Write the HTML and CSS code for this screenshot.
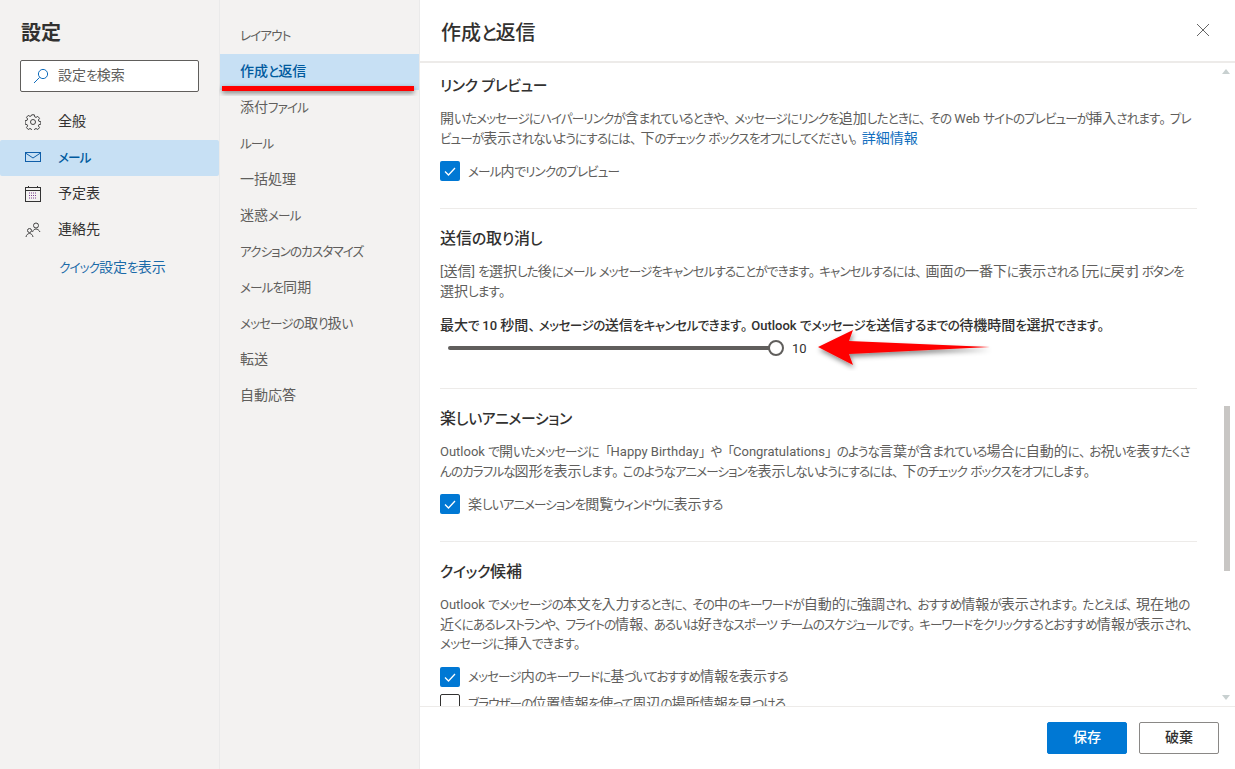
FILE: index.html
```html
<!DOCTYPE html>
<html lang="ja">
<head>
<meta charset="utf-8">
<title>設定</title>
<link rel="stylesheet" href="styles.css">
</head>
<body>
<div class="app">
  <aside class="nav">
    <h1 class="nav-title">設定</h1>
    <div class="search">
      <svg class="search-icon" viewBox="0 0 16 16" width="16" height="16"><circle cx="10" cy="6" r="4.6" fill="none" stroke="#0f6cbd" stroke-width="1"/><path d="M6.6 9.4 1 15" fill="none" stroke="#0f6cbd" stroke-width="1"/></svg>
      <span>設定を検索</span>
    </div>
    <ul class="nav-list">
      <li class="nav-item">
        <svg viewBox="0 0 16 16" width="16" height="16" fill="none" stroke="#444" stroke-width="1"><circle cx="8" cy="8" r="2.5"/><path d="M6.7 .8h2.6l.4 2 1.3.6 1.8-1 1.7 1.9-1.1 1.7.5 1.3 2 .4v2.500l-2 .4-.5 1.300 1.100 1.700-1.700 1.900-1.800-1-1.300.6-.4 2H6.700l-.4-2-1.300-.6-1.800 1-1.700-1.900 1.100-1.700-.5-1.300-2-.4V6.700l2-.4.5-1.300L1.500 3.300l1.700-1.900 1.800 1 1.300-.6z"/></svg>
        <span>全般</span>
      </li>
      <li class="nav-item active">
        <svg viewBox="0 0 16 12" width="16" height="12" fill="none" stroke="#0f5ea8" stroke-width="1"><rect x=".5" y=".5" width="15" height="9"/><path d="M.5 1 8 6l7.500-5"/></svg>
        <span>メール</span>
      </li>
      <li class="nav-item">
        <svg viewBox="0 0 16 16" width="16" height="16" fill="none" stroke="#333" stroke-width="1"><rect x=".5" y="1.500" width="15" height="14"/><path d="M.5 4.500h15M3.500 0v2M12.500 0v2"/><path d="M4 7h8M4 9.500h8M4 12h8" stroke="#7a3b8f" stroke-dasharray="1 1"/></svg>
        <span>予定表</span>
      </li>
      <li class="nav-item">
        <svg viewBox="0 0 16 16" width="16" height="16" fill="none" stroke="#444" stroke-width="1"><circle cx="11" cy="3.500" r="2.500"/><path d="M7.500 10c.5-2 2-3 3.500-3s3 1 4 3"/><circle cx="4.500" cy="8.500" r="2"/><path d="M1 15c.3-2 1.700-3.500 3.500-3.500S7.700 13 8 15"/></svg>
        <span>連絡先</span>
      </li>
    </ul>
    <a class="quick-link">クイック設定を表示</a>
  </aside>

  <nav class="subnav">
    <div class="sub-item">レイアウト</div>
    <div class="sub-item active">作成と返信</div>
    <div class="sub-item">添付ファイル</div>
    <div class="sub-item">ルール</div>
    <div class="sub-item">一括処理</div>
    <div class="sub-item">迷惑メール</div>
    <div class="sub-item">アクションのカスタマイズ</div>
    <div class="sub-item">メールを同期</div>
    <div class="sub-item">メッセージの取り扱い</div>
    <div class="sub-item">転送</div>
    <div class="sub-item">自動応答</div>
  </nav>

  <main class="panel">
    <header class="panel-head">
      <h2>作成と返信</h2>
      <svg class="close" viewBox="0 0 14 14" width="14" height="14"><path d="M1 1l12 12M13 1 1 13" stroke="#666" stroke-width="1" fill="none"/></svg>
    </header>
    <div class="scroller">
      <div class="content">
        <section class="group">
          <h3>リンク プレビュー</h3>
          <p>開いたメッセージにハイパーリンクが含まれているときや、メッセージにリンクを追加したときに、その Web サイトのプレビューが挿入されます。プレビューが表示されないようにするには、下のチェック ボックスをオフにしてください。<a class="link">詳細情報</a></p>
          <label class="check"><span class="box on"><svg viewBox="0 0 20 20" width="20" height="20"><path d="M5 10.500l3.500 3.500L15 7" fill="none" stroke="#fff" stroke-width="1.300"/></svg></span>メール内でリンクのプレビュー</label>
        </section>
        <section class="group">
          <h3>送信の取り消し</h3>
          <p>[送信] を選択した後にメール メッセージをキャンセルすることができます。キャンセルするには、画面の一番下に表示される [元に戻す] ボタンを選択します。</p>
          <div class="slider-label">最大で 10 秒間、メッセージの送信をキャンセルできます。Outlook でメッセージを送信するまでの待機時間を選択できます。</div>
          <div class="slider"><span class="track"></span><span class="thumb"></span><span class="value">10</span></div>
        </section>
        <section class="group">
          <h3>楽しいアニメーション</h3>
          <p>Outlook で開いたメッセージに「Happy Birthday」や「Congratulations」のような言葉が含まれている場合に自動的に、お祝いを表すたくさんのカラフルな図形を表示します。このようなアニメーションを表示しないようにするには、下のチェック ボックスをオフにします。</p>
          <label class="check"><span class="box on"><svg viewBox="0 0 20 20" width="20" height="20"><path d="M5 10.500l3.500 3.500L15 7" fill="none" stroke="#fff" stroke-width="1.300"/></svg></span>楽しいアニメーションを閲覧ウィンドウに表示する</label>
        </section>
        <section class="group">
          <h3>クイック候補</h3>
          <p>Outlook でメッセージの本文を入力するときに、その中のキーワードが自動的に強調され、おすすめ情報が表示されます。たとえば、現在地の近くにあるレストランや、フライトの情報、あるいは好きなスポーツ チームのスケジュールです。キーワードをクリックするとおすすめ情報が表示され、メッセージに挿入できます。</p>
          <label class="check"><span class="box on"><svg viewBox="0 0 20 20" width="20" height="20"><path d="M5 10.500l3.500 3.500L15 7" fill="none" stroke="#fff" stroke-width="1.300"/></svg></span>メッセージ内のキーワードに基づいておすすめ情報を表示する</label>
          <label class="check second"><span class="box"></span>ブラウザーの位置情報を使って周辺の場所情報を見つける</label>
        </section>
      </div>
      <div class="scrollbar">
        <span class="arrow up"></span>
        <span class="thumb-bar"></span>
        <span class="arrow down"></span>
      </div>
    </div>
    <footer class="panel-foot">
      <button class="btn primary">保存</button>
      <button class="btn">破棄</button>
    </footer>
  </main>
</div>

<svg class="annot-line" width="210" height="20" viewBox="0 0 210 20"><defs><filter id="s1" x="-10%" y="-100%" width="120%" height="300%"><feDropShadow dx="0" dy="2" stdDeviation="2.500" flood-color="#000" flood-opacity=".5"/></filter></defs><rect x="3" y="4" width="192" height="5" fill="#f00" filter="url(#s1)"/></svg>
<svg class="annot-arrow" width="200" height="50" viewBox="0 0 200 50"><defs><filter id="s2" x="-10%" y="-30%" width="120%" height="170%"><feDropShadow dx="1" dy="3" stdDeviation="2.500" flood-color="#000" flood-opacity=".45"/></filter></defs><path d="M6 26 41 9 37 20 178 26 37 33 41 44Z" fill="#f00" filter="url(#s2)"/></svg>
<script src="type.js"></script>
</body>
</html>
```
FILE: styles.css
```css
* { box-sizing: border-box; }
html, body { margin: 0; height: 100%; }
body {
  font-family: "Roboto", "Noto Sans CJK JP", sans-serif;
  font-feature-settings: "palt";
  font-size: 13px;
  color: #323130;
  background: #fff;
  overflow: hidden;
  position: relative;
}
.kanji, .kana, .punct, .bracket { line-height: 0; }
.kanji { font-size: 1.08em; }
.kana { font-size: .97em; letter-spacing: -.075em; }
.punct { font-size: 1em; font-feature-settings: normal; letter-spacing: -.2em; }
.bracket { font-size: 1em; font-feature-settings: normal; letter-spacing: -.1em; }

.app { display: flex; width: 1235px; height: 769px; }

.nav {
  width: 220px;
  flex: none;
  background: #f3f2f1;
  border-right: 1px solid #eaeaea;
  display: flex;
  flex-direction: column;
}
.nav-title {
  margin: 19px 0 0 21px;
  font-size: 18.5px;
  line-height: 30px;
  font-weight: 600;
  color: #323130;
}
.search {
  margin: 11px 0 0 20px;
  width: 179px;
  height: 32px;
  background: #fff;
  border: 1px solid #605e5c;
  border-radius: 2px;
  display: flex;
  align-items: center;
  padding-left: 12px;
  gap: 9px;
  color: #605e5c;
  line-height: 28px;
}
.nav-list { list-style: none; margin: 12px 0 0; padding: 0; }
.nav-item {
  height: 36px;
  display: flex;
  align-items: center;
  padding-left: 25px;
  gap: 17px;
  font-size: 13px;
}
.nav-item > span { margin-top: -2px; }
.nav-item svg { flex: none; }
.nav-item.active { background: #c7e0f4; color: #005a9e; border-radius: 2px; font-weight: 500; width: 219px; }
.quick-link { margin: 10px 0 0 59px; color: #1a6aa8; line-height: 20px; font-size: 13px; }

.subnav {
  width: 200px;
  flex: none;
  background: #f3f2f1;
  border-right: 1px solid #eaeaea;
  padding-top: 18px;
}
.sub-item {
  height: 36px;
  line-height: 35px;
  padding-left: 20px;
  color: #605e5c;
}
.sub-item.active { background: #c7e0f4; color: #005a9e; font-weight: 500; width: 199px; }

.panel { flex: 1; min-width: 0; display: flex; flex-direction: column; }
.panel-head {
  height: 63px;
  flex: none;
  border-bottom: 2px solid #edebe9;
  display: flex;
  align-items: center;
  justify-content: space-between;
  padding: 0 25px 0 21px;
}
.panel-head h2 { margin: 7px 0 0; font-size: 18.5px; font-weight: 500; line-height: 30px; }
.close { margin-bottom: 2px; }

.scroller { flex: 1; min-height: 0; display: flex; overflow: hidden; }
.content { width: 757px; margin-left: 20px; flex: none; }
.scrollbar {
  flex: 1;
  position: relative;
}
.arrow { position: absolute; right: 5px; width: 0; height: 0; border-left: 4px solid transparent; border-right: 4px solid transparent; }
.arrow.up { top: 6px; border-bottom: 5px solid #c8d0d0; }
.arrow.down { bottom: 6px; border-top: 5px solid #c8d0d0; }
.thumb-bar { position: absolute; right: 5px; top: 343px; width: 6px; height: 165px; background: #c8c6c4; }

.group { border-bottom: 1px solid #edebe9; padding: 19px 0 26px; }
.group:first-child { padding-top: 12px; }
.group:last-child { border-bottom: 0; }
.group h3 { margin: 0; font-size: 14.8px; line-height: 22px; font-weight: 500; }
.group h3 .kana { font-size: 1em; letter-spacing: -.02em; }
.group p { margin: 12px 0 0; color: #605e5c; line-height: 19.5px; font-size: 13px; }
.link { color: #106ebe; }
.check { display: flex; flex-wrap: nowrap; align-items: center; margin-top: 12px; color: #605e5c; height: 22px; white-space: pre; }
.check.second { margin-top: 5px; }
.box { width: 20px; height: 20px; border: 1px solid #323130; border-radius: 2px; flex: none; margin-right: 8px; }
.box.on { background: #0078d4; border: 0; }
.box svg { display: block; }

.slider-label { margin-top: 15px; line-height: 20px; font-weight: 500; }
.slider-label .kana { letter-spacing: -.05em; }
.slider { display: flex; align-items: center; height: 24px; position: relative; padding-left: 8px; margin: 0 0 2px; }
.track { width: 324px; height: 4px; background: #605e5c; border-radius: 2px; }
.thumb { width: 16px; height: 16px; border: 2px solid #605e5c; background: #fff; border-radius: 50%; margin-left: -4px; }
.value { margin-left: 8px; }

.panel-foot {
  height: 63px;
  flex: none;
  border-top: 1px solid #edebe9;
  display: flex;
  justify-content: flex-end;
  align-items: center;
  gap: 12px;
  padding: 0 16px 0 0;
}
.btn {
  width: 80px;
  height: 32px;
  font: inherit;
  line-height: 28px;
  font-weight: 500;
  border: 1px solid #8a8886;
  border-radius: 2px;
  background: #fff;
  color: #323130;
}
.btn.primary { background: #0078d4; border-color: #0078d4; color: #fff; }

.annot-line { position: absolute; left: 219px; top: 82px; }
.annot-arrow { position: absolute; left: 812px; top: 321px; }
```
FILE: type.js
```js
const runs = /([\u3041-\u30ff]+)|([\u3400-\u9fff]+)|([、。]+)|([「」]+)/g;
const walker = document.createTreeWalker(document.querySelector('.app'), NodeFilter.SHOW_TEXT);
const nodes = [];
while (walker.nextNode()) {
  if (walker.currentNode.nodeValue.trim()) nodes.push(walker.currentNode);
}
for (const node of nodes) {
  const text = node.nodeValue;
  const frag = document.createDocumentFragment();
  let last = 0;
  for (const m of text.matchAll(runs)) {
    if (m.index > last) frag.append(text.slice(last, m.index));
    const span = document.createElement('span');
    span.className = m[1] ? 'kana' : m[2] ? 'kanji' : m[3] ? 'punct' : 'bracket';
    span.textContent = m[0];
    frag.append(span);
    last = m.index + m[0].length;
  }
  if (last < text.length) frag.append(text.slice(last));
  const holder = document.createElement('span');
  holder.append(frag);
  node.replaceWith(holder);
}
```
